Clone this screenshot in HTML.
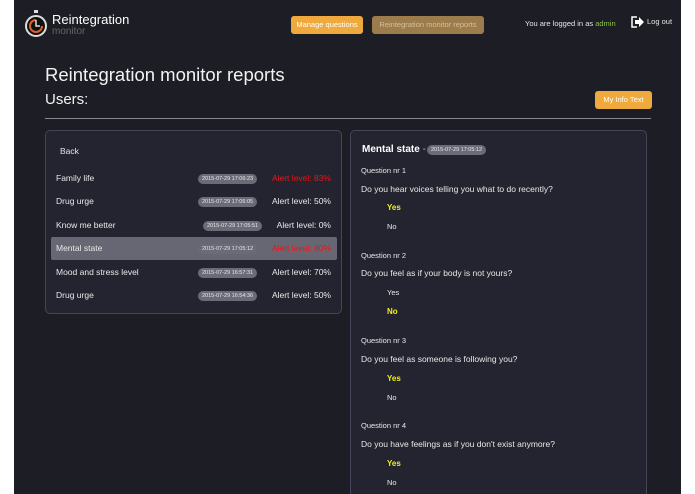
<!DOCTYPE html>
<html><head><meta charset="utf-8"><style>
*{margin:0;padding:0;box-sizing:border-box}
html,body{width:695px;height:494px;overflow:hidden}
body{background:#fff;font-family:"Liberation Sans",sans-serif;position:relative}
#pg{position:absolute;left:14px;top:0;width:667px;height:494px;background:#1d1d25;color:#e8e8e8;overflow:hidden}
.a{position:absolute;white-space:nowrap}
.r{position:absolute;white-space:nowrap;right:350px}
.btn{position:absolute;border-radius:3px;font-size:7.5px;color:#fff;text-align:center}
.panel{position:absolute;background:#242430;border:1px solid #45455a;border-radius:5px}
.badge{position:absolute;background:#6b6b78;color:#e8e8e8;border-radius:6px;font-size:5.5px;height:10px;line-height:10px;padding:0 4px}
.t{font-size:8.5px}
.red{color:#e0191b}
.y{color:#f0f01a;font-weight:bold;font-size:8px}
.s{font-size:7.5px}
</style></head><body><div id="pg">
<svg class="a" style="left:10px;top:9px" width="24" height="30" viewBox="0 0 24 30"><rect x="10" y="1" width="4" height="3" fill="#ddd"/><circle cx="12" cy="17" r="10" fill="#111" stroke="#ddd" stroke-width="2"/><path d="M12 11 A6 6 0 1 0 18 17" fill="none" stroke="#e0602a" stroke-width="2"/><path d="M12 11v6h4" fill="none" stroke="#ddd" stroke-width="1.5"/></svg>
<div class="a" style="left:38px;top:12px;font-size:13px;color:#fff">Reintegration</div>
<div class="a" style="left:38px;top:26px;font-size:10px;color:#666">monitor</div>
<div class="btn" style="left:277px;top:16px;width:72px;height:18px;line-height:18px;background:#f0a93c">Manage questions</div>
<div class="btn" style="left:358px;top:16px;width:112px;height:18px;line-height:18px;background:#9c7c4a;color:#d4c0a0">Reintegration monitor reports</div>
<div class="a" style="left:511px;top:19px;font-size:7.5px">You are logged in as <span style="color:#8bc34a">admin</span></div>
<svg class="a" style="left:617px;top:16px" width="14" height="12" viewBox="0 0 14 12"><path d="M6 1H1v10h5" fill="none" stroke="#fff" stroke-width="1.5"/><path d="M4 4h4V1l5 5-5 5V8H4z" fill="#fff"/></svg>
<div class="a" style="left:633px;top:17px;font-size:7.5px">Log out</div>
<div class="a" style="left:31px;top:64px;font-size:18.5px;color:#f2f2f2">Reintegration monitor reports</div>
<div class="a" style="left:31px;top:91px;font-size:15px;color:#f2f2f2">Users:</div>
<div class="btn" style="left:581px;top:91px;width:57px;height:18px;line-height:18px;background:#f0a93c">My Info Text</div>
<div class="a" style="left:31px;top:118px;width:606px;height:1px;background:#888"></div>
<div class="panel" style="left:31px;top:130px;width:297px;height:184px"></div>
<div class="a t" style="left:46px;top:146px">Back</div>
<div class="a" style="left:37px;top:237px;width:286px;height:23px;background:#676774;border-radius:2px"></div>
<div class="a t" style="left:42px;top:173px">Family life</div><div class="badge" style="left:184px;top:174px">2015-07-29 17:06:23</div><div class="r t red" style="top:173px">Alert level: 83%</div>
<div class="a t" style="left:42px;top:196px">Drug urge</div><div class="badge" style="left:184px;top:197px">2015-07-29 17:06:05</div><div class="r t" style="top:196px">Alert level: 50%</div>
<div class="a t" style="left:42px;top:220px">Know me better</div><div class="badge" style="left:189px;top:221px">2015-07-29 17:05:51</div><div class="r t" style="top:220px">Alert level: 0%</div>
<div class="a t" style="left:42px;top:243px">Mental state</div><div class="badge" style="left:184px;top:244px">2015-07-29 17:05:12</div><div class="r t red" style="top:243px">Alert level: 80%</div>
<div class="a t" style="left:42px;top:267px">Mood and stress level</div><div class="badge" style="left:184px;top:268px">2015-07-29 16:57:31</div><div class="r t" style="top:267px">Alert level: 70%</div>
<div class="a t" style="left:42px;top:290px">Drug urge</div><div class="badge" style="left:184px;top:291px">2015-07-29 16:54:36</div><div class="r t" style="top:290px">Alert level: 50%</div>
<div class="panel" style="left:336px;top:130px;width:297px;height:380px"></div>
<div class="a" style="left:348px;top:144px;font-size:10px;font-weight:bold;color:#fff">Mental state <span style="font-weight:normal;color:#aaa">-</span></div>
<div class="badge" style="left:413px;top:145px">2015-07-29 17:05:12</div>
<div class="a s" style="left:347px;top:166px">Question nr 1</div>
<div class="a t" style="left:347px;top:184px">Do you hear voices telling you what to do recently?</div>
<div class="a y" style="left:373px;top:203px">Yes</div><div class="a s" style="left:373px;top:222px">No</div>
<div class="a s" style="left:347px;top:251px">Question nr 2</div>
<div class="a t" style="left:347px;top:268px">Do you feel as if your body is not yours?</div>
<div class="a s" style="left:373px;top:288px">Yes</div><div class="a y" style="left:373px;top:307px">No</div>
<div class="a s" style="left:347px;top:336px">Question nr 3</div>
<div class="a t" style="left:347px;top:354px">Do you feel as someone is following you?</div>
<div class="a y" style="left:373px;top:374px">Yes</div><div class="a s" style="left:373px;top:393px">No</div>
<div class="a s" style="left:347px;top:421px">Question nr 4</div>
<div class="a t" style="left:347px;top:439px">Do you have feelings as if you don't exist anymore?</div>
<div class="a y" style="left:373px;top:459px">Yes</div><div class="a s" style="left:373px;top:478px">No</div>
</div></body></html>
